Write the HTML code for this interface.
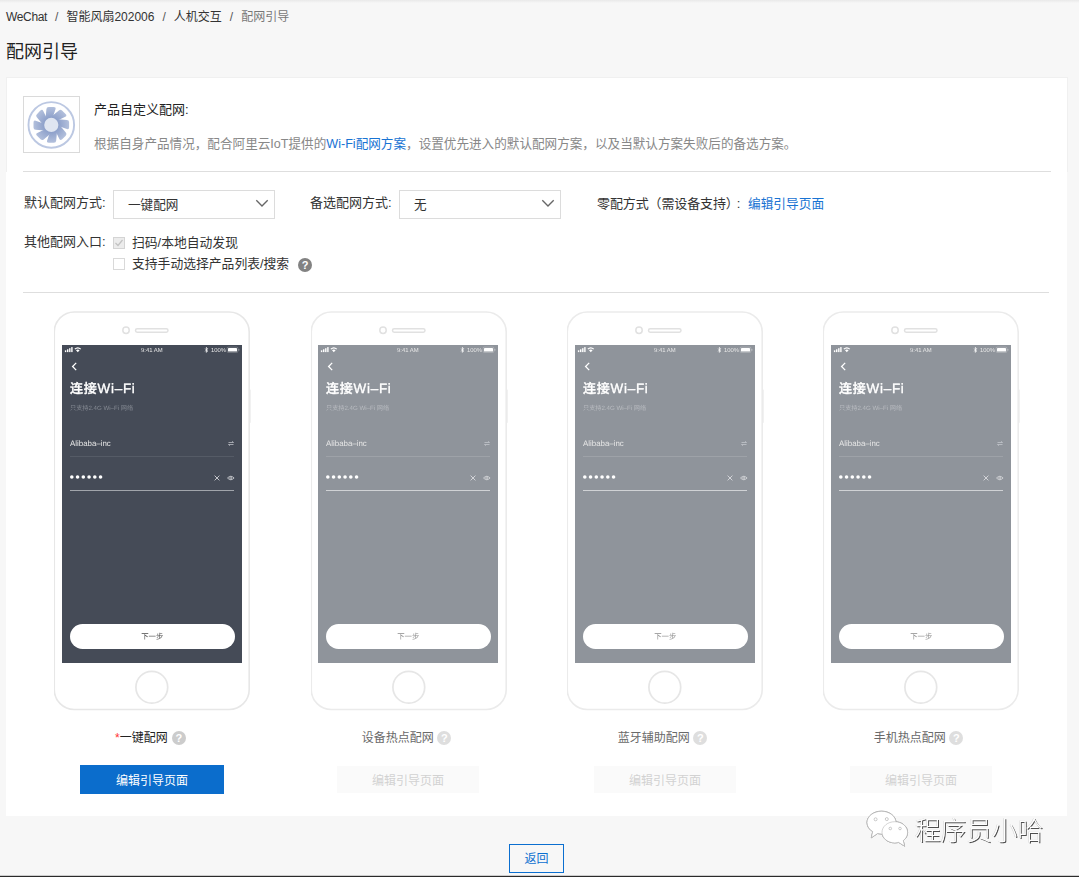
<!DOCTYPE html>
<html lang="zh-CN">
<head>
<meta charset="utf-8">
<title>配网引导</title>
<style>
*{box-sizing:border-box;margin:0;padding:0}
html,body{width:1079px;height:877px;overflow:hidden}
body{position:relative;background:#f7f7f7;font-family:"Liberation Sans","Noto Sans CJK SC",sans-serif;font-size:13px;color:#333}
.abs{position:absolute;white-space:nowrap;line-height:1}
.topshade{position:absolute;left:0;top:0;width:1079px;height:3px;background:linear-gradient(#e9e9e9,#f7f7f7)}
.crumb{left:6px;top:11px;font-size:12px;color:#333}
.crumb .sep{color:#555;margin:0 8px}
.crumb .cur{color:#777}
.crumb .wc{letter-spacing:-0.35px}
.h1{left:6px;top:43px;font-size:18px;color:#222}
.card{position:absolute;left:6px;top:78px;width:1061px;height:738px;background:#fff}
.cardtop{position:absolute;left:6px;top:77px;width:1062px;height:95px;border:1px solid #f0f0f0;border-bottom:none}
.iconbox{position:absolute;left:23px;top:96px;width:57px;height:57px;border:1px solid #dadada;background:#fff}
.hr{position:absolute;height:1px;background:#dedede}
.lbl{font-size:13px;color:#333}
.s2{font-size:12.8px}
.lbl.lk{font-size:12.7px}
.desc{font-size:12.6px;color:#888}
.lk{color:#1873d3}
.sel{position:absolute;width:162px;height:29px;border:1px solid #dcdcdc;background:#fff}
.sel span{position:absolute;left:14px;top:8px;font-size:12.6px;line-height:1;color:#333}
.sel svg{position:absolute;right:5px;top:8.3px}
.cb{position:absolute;width:12px;height:12px;border:1px solid #d9d9d9;background:#fff}
.cb.dis{background:#ececec;border-color:#d4d4d4}
.help{position:absolute;width:14px;height:14px;border-radius:50%;background:#cccccc;color:#fff;font-size:11px;font-weight:bold;text-align:center;line-height:14px;font-family:"Liberation Sans",sans-serif}
.help.lt{background:#dedede}
.help.dark{background:#828282}
.phone{position:absolute;top:311px;width:196px;height:399px}
.phone .shell{position:absolute;left:0;top:0}
.phone .scr{position:absolute;left:8px;top:34px;width:180px;height:318px;background:#454b57;overflow:hidden;color:#fff;text-rendering:geometricPrecision}
.phone.off .scr{background:#8f949b}
.scr .t{position:absolute;white-space:nowrap;line-height:1;will-change:transform}
.scr svg{position:absolute}
.scr .sb{left:0;top:0}
.scr .st{font-size:5.9px;color:#e8e8e8}
.scr .bk{left:8.6px;top:16.5px}
.scr .ti{left:8px;top:37px;font-size:13px;font-weight:500;letter-spacing:0.75px;-webkit-text-stroke:0.35px #fff}
.scr .ti span{font-size:13.45px}
.scr .su{left:8px;top:61px;font-size:6.15px;color:#868b94}
.phone.off .su{color:#b9bcc1}
.scr .ss{left:8px;top:95.1px;font-size:7.9px;color:#e6e6e6}
.scr .sw{left:166px;top:96px}
.scr .ln{position:absolute;left:8px;width:164px;height:1px}
.scr .l1{top:111px;background:#555b66}
.phone.off .l1{background:#9ea2a8}
.scr .l2{top:145px;background:#a1a5ab}
.phone.off .l2{background:#d0d2d5}
.scr .dots{left:7.9px;top:130.3px}
.scr .xx{left:152px;top:130px}
.scr .ey{left:164.5px;top:130px}
.scr .btn{will-change:transform;position:absolute;left:8px;top:279px;width:164.5px;height:25px;border-radius:13px;background:#fff;color:#4a4a4a;font-size:7.4px;text-align:center;line-height:25px}
.phone.off .btn{color:#8c8c8c}
.plabel{font-size:12px;color:#6a6a6a}
.star{color:#f33}
.pbtn{position:absolute;height:29px;text-align:center;font-size:12px;line-height:32px}
.pbtn.pri{background:#0b6dcc;color:#fff;width:144px}
.pbtn.dis{background:#fafafa;color:#d2d2d2;width:142px;height:27px;line-height:30px}
.ret{position:absolute;left:509px;top:844px;width:55px;height:29px;border:1px solid #0b6fd0;background:#f7f7f7;color:#0b6fd0;font-size:12px;text-align:center;line-height:29.5px}
.bottomline{position:absolute;left:0;top:875px;width:1079px;height:2px;background:linear-gradient(#cdcdcd 50%,#2b2b2b 50%)}
.wm{left:915px;top:818.5px;font-size:25.6px;font-weight:300;color:#fff;will-change:transform;text-shadow:1px 1px 0 #4f4f4f,-0.5px -0.5px 0 #cfcfcf}
.wx{position:absolute;left:864px;top:808px;filter:drop-shadow(0.8px 0.8px 0 #666)}
</style>
</head>
<body>
<div class="topshade"></div>
<div class="abs crumb"><span class="wc">WeChat</span><span class="sep">/</span>智能风扇202006<span class="sep">/</span>人机交互<span class="sep">/</span><span class="cur">配网引导</span></div>
<div class="abs h1">配网引导</div>
<div class="card"></div><div class="cardtop"></div>

<div class="iconbox"><svg width="55" height="55" viewBox="0 0 55 55" style="position:absolute;left:0;top:0"><defs><radialGradient id="fg" gradientUnits="userSpaceOnUse" cx="0" cy="0" r="18"><stop offset="0.35" stop-color="#8b9ec9"/><stop offset="1" stop-color="#b3c0dc"/></radialGradient></defs><circle cx="27.3" cy="27.9" r="22.8" fill="none" stroke="#bcc8e2" stroke-width="1.9"/><g fill="url(#fg)" transform="translate(27.3 27.9)"><path d="M-5.7 -7.2 L-4.9 -15.6 Q-4.8 -17.8 -2.6 -17.8 L2.4 -17.8 Q4.9 -17.8 4.2 -15.6 L1.2 -7 L1 -4 L-5 -4 Z" transform="rotate(0)"/><path d="M-5.7 -7.2 L-4.9 -15.6 Q-4.8 -17.8 -2.6 -17.8 L2.4 -17.8 Q4.9 -17.8 4.2 -15.6 L1.2 -7 L1 -4 L-5 -4 Z" transform="rotate(45)"/><path d="M-5.7 -7.2 L-4.9 -15.6 Q-4.8 -17.8 -2.6 -17.8 L2.4 -17.8 Q4.9 -17.8 4.2 -15.6 L1.2 -7 L1 -4 L-5 -4 Z" transform="rotate(90)"/><path d="M-5.7 -7.2 L-4.9 -15.6 Q-4.8 -17.8 -2.6 -17.8 L2.4 -17.8 Q4.9 -17.8 4.2 -15.6 L1.2 -7 L1 -4 L-5 -4 Z" transform="rotate(135)"/><path d="M-5.7 -7.2 L-4.9 -15.6 Q-4.8 -17.8 -2.6 -17.8 L2.4 -17.8 Q4.9 -17.8 4.2 -15.6 L1.2 -7 L1 -4 L-5 -4 Z" transform="rotate(180)"/><path d="M-5.7 -7.2 L-4.9 -15.6 Q-4.8 -17.8 -2.6 -17.8 L2.4 -17.8 Q4.9 -17.8 4.2 -15.6 L1.2 -7 L1 -4 L-5 -4 Z" transform="rotate(225)"/><path d="M-5.7 -7.2 L-4.9 -15.6 Q-4.8 -17.8 -2.6 -17.8 L2.4 -17.8 Q4.9 -17.8 4.2 -15.6 L1.2 -7 L1 -4 L-5 -4 Z" transform="rotate(270)"/><path d="M-5.7 -7.2 L-4.9 -15.6 Q-4.8 -17.8 -2.6 -17.8 L2.4 -17.8 Q4.9 -17.8 4.2 -15.6 L1.2 -7 L1 -4 L-5 -4 Z" transform="rotate(315)"/></g><circle cx="27.3" cy="27.9" r="7.1" fill="#dfe5f1"/></svg></div>
<div class="abs lbl" style="left:94px;top:102.5px;color:#222">产品自定义配网:</div>
<div class="abs desc" style="left:94px;top:138px">根据自身产品情况，配合阿里云IoT提供的<span class="lk">Wi-Fi配网方案</span>，设置优先进入的默认配网方案，以及当默认方案失败后的备选方案。</div>
<div class="hr" style="left:23px;top:171px;width:1027.5px"></div>

<div class="abs lbl" style="left:24px;top:196px">默认配网方式:</div>
<div class="sel" style="left:113px;top:190px"><span>一键配网</span><svg width="14" height="9" viewBox="0 0 14 9"><path d="M1.3 1.2 L7 7 L12.7 1.2" fill="none" stroke="#666" stroke-width="1.35"/></svg></div>
<div class="abs lbl" style="left:310px;top:196px">备选配网方式:</div>
<div class="sel" style="left:399px;top:190px"><span>无</span><svg width="14" height="9" viewBox="0 0 14 9"><path d="M1.3 1.2 L7 7 L12.7 1.2" fill="none" stroke="#666" stroke-width="1.35"/></svg></div>
<div class="abs lbl" style="left:597px;top:196.5px;letter-spacing:-0.12px">零配方式（需设备支持）<span style="margin-left:-2px">:</span></div>
<div class="abs lbl lk" style="left:748px;top:197.5px">编辑引导页面</div>

<div class="abs lbl" style="left:24px;top:235px">其他配网入口:</div>
<div class="cb dis" style="left:113px;top:237px"><svg width="10" height="10" viewBox="0 0 10 10" style="position:absolute;left:0;top:0"><path d="M1.5 5 L4 7.5 L8.5 2" fill="none" stroke="#c2c2c2" stroke-width="1.2"/></svg></div>
<div class="abs lbl s2" style="left:132px;top:237px">扫码/本地自动发现</div>
<div class="cb" style="left:113px;top:258px"></div>
<div class="abs lbl s2" style="left:132px;top:258px">支持手动选择产品列表/搜索</div>
<div class="help dark" style="left:298px;top:258px">?</div>
<div class="hr" style="left:23px;top:292px;width:1026px"></div>

<div class="phone" style="left:54px">
<svg class="shell" width="200" height="400" viewBox="0 0 200 400"><rect x="195.2" y="78.6" width="1.5" height="33.2" fill="#ececec"/><rect x="0.25" y="1.05" width="194.95" height="397.45" rx="20" fill="#fff" stroke="#e7e7e7" stroke-width="1.6"/><circle cx="72.03" cy="19.2" r="3.2" fill="none" stroke="#e1e1e1" stroke-width="1.5"/><rect x="81.5" y="17.8" width="32.5" height="3.4" rx="1.7" fill="none" stroke="#e1e1e1" stroke-width="1.5"/><circle cx="97.8" cy="376.25" r="15.9" fill="none" stroke="#e6e6e6" stroke-width="1.7"/></svg>
<div class="scr" style="left:8px">
<svg class="sb" width="180" height="10" viewBox="0 0 180 10"><g fill="#fff">
<rect x="2.9" y="5.3" width="1.4" height="1.8"/><rect x="5" y="4.3" width="1.4" height="2.8"/><rect x="7.1" y="3.2" width="1.4" height="3.9"/><rect x="9.2" y="2.1" width="1.4" height="5"/>
<path d="M12.4 3.7 Q15.8 0.7 19.2 3.7 L18.3 4.6 Q15.8 2.5 13.3 4.6 Z"/><path d="M14 5.3 Q15.8 3.8 17.6 5.3 L15.8 7.3 Z"/>
<rect x="166" y="3" width="9" height="3.6" rx="0.4"/><rect x="165.1" y="2.1" width="10.8" height="5.4" rx="1.2" fill="none" stroke="#fff" stroke-opacity="0.45" stroke-width="0.5"/><rect x="176.5" y="3.9" width="0.8" height="1.8" fill-opacity="0.5"/>
<path d="M143.2 3.6 L145.6 6 L144.4 7.4 L144.4 2.4 L145.6 3.8 L143.2 6.4" fill="none" stroke="#fff" stroke-width="0.75"/>
</g></svg>
<div class="t st" style="left:79px;top:3.6px">9:41 AM</div>
<div class="t st" style="left:148.5px;top:3.6px">100%</div>
<svg class="bk" width="7" height="9" viewBox="0 0 7 9"><path d="M5.2 0.9 L1.6 4.5 L5.2 8.1" fill="none" stroke="#fff" stroke-width="1.3"/></svg>
<div class="t ti">连接<span>Wi–Fi</span></div>
<div class="t su">只支持2.4G Wi–Fi 网络</div>
<div class="t ss">Alibaba–inc</div>
<svg class="sw" width="6" height="5" viewBox="0 0 6 5"><path d="M0.5 1.5 H5.5 M4 0.3 L5.5 1.5 M0.5 3.5 H5.5 M2 4.7 L0.5 3.5" fill="none" stroke="#c9ccd1" stroke-width="0.7"/></svg>
<div class="ln l1"></div>
<svg class="dots" width="34" height="4" viewBox="0 0 34 4"><g fill="#fff"><circle cx="1.80" cy="2" r="1.8"/><circle cx="7.55" cy="2" r="1.8"/><circle cx="13.30" cy="2" r="1.8"/><circle cx="19.05" cy="2" r="1.8"/><circle cx="24.80" cy="2" r="1.8"/><circle cx="30.55" cy="2" r="1.8"/></g></svg>
<svg class="xx" width="6" height="6" viewBox="0 0 6 6"><path d="M0.6 0.6 L5.4 5.4 M5.4 0.6 L0.6 5.4" fill="none" stroke="#e4e5e8" stroke-width="0.8"/></svg>
<svg class="ey" width="8" height="6" viewBox="0 0 8 6"><path d="M0.5 3 Q3.8 -0.5 7.1 3 Q3.8 6.5 0.5 3 Z" fill="none" stroke="#dcdde0" stroke-width="0.75"/><circle cx="3.8" cy="3" r="1.1" fill="none" stroke="#dcdde0" stroke-width="0.7"/></svg>
<div class="ln l2"></div>
<div class="btn">下一步</div>
</div>
</div>
<div class="abs plabel" style="left:115px;top:731.5px;color:#222"><span class="star">*</span>一键配网</div>
<div class="help" style="left:171.8px;top:730.6px">?</div>
<div class="pbtn pri" style="left:80px;top:765px">编辑引导页面</div>
<div class="phone off" style="left:311px">
<svg class="shell" width="200" height="400" viewBox="0 0 200 400"><rect x="195.2" y="78.6" width="1.5" height="33.2" fill="#ececec"/><rect x="0.25" y="1.05" width="194.95" height="397.45" rx="20" fill="#fff" stroke="#ebebeb" stroke-width="1.6"/><circle cx="72.03" cy="19.2" r="3.2" fill="none" stroke="#e1e1e1" stroke-width="1.5"/><rect x="81.5" y="17.8" width="32.5" height="3.4" rx="1.7" fill="none" stroke="#e1e1e1" stroke-width="1.5"/><circle cx="97.8" cy="376.25" r="15.9" fill="none" stroke="#e6e6e6" stroke-width="1.7"/></svg>
<div class="scr" style="left:7px">
<svg class="sb" width="180" height="10" viewBox="0 0 180 10"><g fill="#fff">
<rect x="2.9" y="5.3" width="1.4" height="1.8"/><rect x="5" y="4.3" width="1.4" height="2.8"/><rect x="7.1" y="3.2" width="1.4" height="3.9"/><rect x="9.2" y="2.1" width="1.4" height="5"/>
<path d="M12.4 3.7 Q15.8 0.7 19.2 3.7 L18.3 4.6 Q15.8 2.5 13.3 4.6 Z"/><path d="M14 5.3 Q15.8 3.8 17.6 5.3 L15.8 7.3 Z"/>
<rect x="166" y="3" width="9" height="3.6" rx="0.4"/><rect x="165.1" y="2.1" width="10.8" height="5.4" rx="1.2" fill="none" stroke="#fff" stroke-opacity="0.45" stroke-width="0.5"/><rect x="176.5" y="3.9" width="0.8" height="1.8" fill-opacity="0.5"/>
<path d="M143.2 3.6 L145.6 6 L144.4 7.4 L144.4 2.4 L145.6 3.8 L143.2 6.4" fill="none" stroke="#fff" stroke-width="0.75"/>
</g></svg>
<div class="t st" style="left:79px;top:3.6px">9:41 AM</div>
<div class="t st" style="left:148.5px;top:3.6px">100%</div>
<svg class="bk" width="7" height="9" viewBox="0 0 7 9"><path d="M5.2 0.9 L1.6 4.5 L5.2 8.1" fill="none" stroke="#fff" stroke-width="1.3"/></svg>
<div class="t ti">连接<span>Wi–Fi</span></div>
<div class="t su">只支持2.4G Wi–Fi 网络</div>
<div class="t ss">Alibaba–inc</div>
<svg class="sw" width="6" height="5" viewBox="0 0 6 5"><path d="M0.5 1.5 H5.5 M4 0.3 L5.5 1.5 M0.5 3.5 H5.5 M2 4.7 L0.5 3.5" fill="none" stroke="#c9ccd1" stroke-width="0.7"/></svg>
<div class="ln l1"></div>
<svg class="dots" width="34" height="4" viewBox="0 0 34 4"><g fill="#fff"><circle cx="1.80" cy="2" r="1.8"/><circle cx="7.55" cy="2" r="1.8"/><circle cx="13.30" cy="2" r="1.8"/><circle cx="19.05" cy="2" r="1.8"/><circle cx="24.80" cy="2" r="1.8"/><circle cx="30.55" cy="2" r="1.8"/></g></svg>
<svg class="xx" width="6" height="6" viewBox="0 0 6 6"><path d="M0.6 0.6 L5.4 5.4 M5.4 0.6 L0.6 5.4" fill="none" stroke="#e4e5e8" stroke-width="0.8"/></svg>
<svg class="ey" width="8" height="6" viewBox="0 0 8 6"><path d="M0.5 3 Q3.8 -0.5 7.1 3 Q3.8 6.5 0.5 3 Z" fill="none" stroke="#dcdde0" stroke-width="0.75"/><circle cx="3.8" cy="3" r="1.1" fill="none" stroke="#dcdde0" stroke-width="0.7"/></svg>
<div class="ln l2"></div>
<div class="btn">下一步</div>
</div>
</div>
<div class="abs plabel" style="left:361.7px;top:731.5px">设备热点配网</div>
<div class="help lt" style="left:437.3px;top:730.6px">?</div>
<div class="pbtn dis" style="left:337px;top:766px">编辑引导页面</div>
<div class="phone off" style="left:567px">
<svg class="shell" width="200" height="400" viewBox="0 0 200 400"><rect x="195.2" y="78.6" width="1.5" height="33.2" fill="#ececec"/><rect x="0.25" y="1.05" width="194.95" height="397.45" rx="20" fill="#fff" stroke="#ebebeb" stroke-width="1.6"/><circle cx="72.03" cy="19.2" r="3.2" fill="none" stroke="#e1e1e1" stroke-width="1.5"/><rect x="81.5" y="17.8" width="32.5" height="3.4" rx="1.7" fill="none" stroke="#e1e1e1" stroke-width="1.5"/><circle cx="97.8" cy="376.25" r="15.9" fill="none" stroke="#e6e6e6" stroke-width="1.7"/></svg>
<div class="scr" style="left:8px">
<svg class="sb" width="180" height="10" viewBox="0 0 180 10"><g fill="#fff">
<rect x="2.9" y="5.3" width="1.4" height="1.8"/><rect x="5" y="4.3" width="1.4" height="2.8"/><rect x="7.1" y="3.2" width="1.4" height="3.9"/><rect x="9.2" y="2.1" width="1.4" height="5"/>
<path d="M12.4 3.7 Q15.8 0.7 19.2 3.7 L18.3 4.6 Q15.8 2.5 13.3 4.6 Z"/><path d="M14 5.3 Q15.8 3.8 17.6 5.3 L15.8 7.3 Z"/>
<rect x="166" y="3" width="9" height="3.6" rx="0.4"/><rect x="165.1" y="2.1" width="10.8" height="5.4" rx="1.2" fill="none" stroke="#fff" stroke-opacity="0.45" stroke-width="0.5"/><rect x="176.5" y="3.9" width="0.8" height="1.8" fill-opacity="0.5"/>
<path d="M143.2 3.6 L145.6 6 L144.4 7.4 L144.4 2.4 L145.6 3.8 L143.2 6.4" fill="none" stroke="#fff" stroke-width="0.75"/>
</g></svg>
<div class="t st" style="left:79px;top:3.6px">9:41 AM</div>
<div class="t st" style="left:148.5px;top:3.6px">100%</div>
<svg class="bk" width="7" height="9" viewBox="0 0 7 9"><path d="M5.2 0.9 L1.6 4.5 L5.2 8.1" fill="none" stroke="#fff" stroke-width="1.3"/></svg>
<div class="t ti">连接<span>Wi–Fi</span></div>
<div class="t su">只支持2.4G Wi–Fi 网络</div>
<div class="t ss">Alibaba–inc</div>
<svg class="sw" width="6" height="5" viewBox="0 0 6 5"><path d="M0.5 1.5 H5.5 M4 0.3 L5.5 1.5 M0.5 3.5 H5.5 M2 4.7 L0.5 3.5" fill="none" stroke="#c9ccd1" stroke-width="0.7"/></svg>
<div class="ln l1"></div>
<svg class="dots" width="34" height="4" viewBox="0 0 34 4"><g fill="#fff"><circle cx="1.80" cy="2" r="1.8"/><circle cx="7.55" cy="2" r="1.8"/><circle cx="13.30" cy="2" r="1.8"/><circle cx="19.05" cy="2" r="1.8"/><circle cx="24.80" cy="2" r="1.8"/><circle cx="30.55" cy="2" r="1.8"/></g></svg>
<svg class="xx" width="6" height="6" viewBox="0 0 6 6"><path d="M0.6 0.6 L5.4 5.4 M5.4 0.6 L0.6 5.4" fill="none" stroke="#e4e5e8" stroke-width="0.8"/></svg>
<svg class="ey" width="8" height="6" viewBox="0 0 8 6"><path d="M0.5 3 Q3.8 -0.5 7.1 3 Q3.8 6.5 0.5 3 Z" fill="none" stroke="#dcdde0" stroke-width="0.75"/><circle cx="3.8" cy="3" r="1.1" fill="none" stroke="#dcdde0" stroke-width="0.7"/></svg>
<div class="ln l2"></div>
<div class="btn">下一步</div>
</div>
</div>
<div class="abs plabel" style="left:617.7px;top:731.5px">蓝牙辅助配网</div>
<div class="help lt" style="left:693.3px;top:730.6px">?</div>
<div class="pbtn dis" style="left:594px;top:766px">编辑引导页面</div>
<div class="phone off" style="left:823px">
<svg class="shell" width="200" height="400" viewBox="0 0 200 400"><rect x="195.2" y="78.6" width="1.5" height="33.2" fill="#ececec"/><rect x="0.25" y="1.05" width="194.95" height="397.45" rx="20" fill="#fff" stroke="#ebebeb" stroke-width="1.6"/><circle cx="72.03" cy="19.2" r="3.2" fill="none" stroke="#e1e1e1" stroke-width="1.5"/><rect x="81.5" y="17.8" width="32.5" height="3.4" rx="1.7" fill="none" stroke="#e1e1e1" stroke-width="1.5"/><circle cx="97.8" cy="376.25" r="15.9" fill="none" stroke="#e6e6e6" stroke-width="1.7"/></svg>
<div class="scr" style="left:8px">
<svg class="sb" width="180" height="10" viewBox="0 0 180 10"><g fill="#fff">
<rect x="2.9" y="5.3" width="1.4" height="1.8"/><rect x="5" y="4.3" width="1.4" height="2.8"/><rect x="7.1" y="3.2" width="1.4" height="3.9"/><rect x="9.2" y="2.1" width="1.4" height="5"/>
<path d="M12.4 3.7 Q15.8 0.7 19.2 3.7 L18.3 4.6 Q15.8 2.5 13.3 4.6 Z"/><path d="M14 5.3 Q15.8 3.8 17.6 5.3 L15.8 7.3 Z"/>
<rect x="166" y="3" width="9" height="3.6" rx="0.4"/><rect x="165.1" y="2.1" width="10.8" height="5.4" rx="1.2" fill="none" stroke="#fff" stroke-opacity="0.45" stroke-width="0.5"/><rect x="176.5" y="3.9" width="0.8" height="1.8" fill-opacity="0.5"/>
<path d="M143.2 3.6 L145.6 6 L144.4 7.4 L144.4 2.4 L145.6 3.8 L143.2 6.4" fill="none" stroke="#fff" stroke-width="0.75"/>
</g></svg>
<div class="t st" style="left:79px;top:3.6px">9:41 AM</div>
<div class="t st" style="left:148.5px;top:3.6px">100%</div>
<svg class="bk" width="7" height="9" viewBox="0 0 7 9"><path d="M5.2 0.9 L1.6 4.5 L5.2 8.1" fill="none" stroke="#fff" stroke-width="1.3"/></svg>
<div class="t ti">连接<span>Wi–Fi</span></div>
<div class="t su">只支持2.4G Wi–Fi 网络</div>
<div class="t ss">Alibaba–inc</div>
<svg class="sw" width="6" height="5" viewBox="0 0 6 5"><path d="M0.5 1.5 H5.5 M4 0.3 L5.5 1.5 M0.5 3.5 H5.5 M2 4.7 L0.5 3.5" fill="none" stroke="#c9ccd1" stroke-width="0.7"/></svg>
<div class="ln l1"></div>
<svg class="dots" width="34" height="4" viewBox="0 0 34 4"><g fill="#fff"><circle cx="1.80" cy="2" r="1.8"/><circle cx="7.55" cy="2" r="1.8"/><circle cx="13.30" cy="2" r="1.8"/><circle cx="19.05" cy="2" r="1.8"/><circle cx="24.80" cy="2" r="1.8"/><circle cx="30.55" cy="2" r="1.8"/></g></svg>
<svg class="xx" width="6" height="6" viewBox="0 0 6 6"><path d="M0.6 0.6 L5.4 5.4 M5.4 0.6 L0.6 5.4" fill="none" stroke="#e4e5e8" stroke-width="0.8"/></svg>
<svg class="ey" width="8" height="6" viewBox="0 0 8 6"><path d="M0.5 3 Q3.8 -0.5 7.1 3 Q3.8 6.5 0.5 3 Z" fill="none" stroke="#dcdde0" stroke-width="0.75"/><circle cx="3.8" cy="3" r="1.1" fill="none" stroke="#dcdde0" stroke-width="0.7"/></svg>
<div class="ln l2"></div>
<div class="btn">下一步</div>
</div>
</div>
<div class="abs plabel" style="left:873.7px;top:731.5px">手机热点配网</div>
<div class="help lt" style="left:949.3px;top:730.6px">?</div>
<div class="pbtn dis" style="left:850px;top:766px">编辑引导页面</div>

<div class="ret">返回</div>
<svg class="wx" width="48" height="42" viewBox="864 808 48 42"><g id="wxs" fill="#fff" stroke="#c2c2c2" stroke-width="0.7"><path d="M881.5 811.2 C873.5 811.2 867 816.3 867 822.6 C867 826.3 869.2 829.5 872.7 831.6 L871.3 837.8 L877.6 833.5 C878.8 833.8 880.1 834 881.5 834 C889.5 834 896 828.9 896 822.6 C896 816.3 889.5 811.2 881.5 811.2 Z"/><path d="M894.8 821.7 C887.7 821.7 882 826.4 882 832.3 C882 838.2 887.7 842.9 894.8 842.9 C896.2 842.9 897.5 842.7 898.7 842.4 L904.6 846.2 L903.3 840.6 C906 838.7 907.6 835.7 907.6 832.3 C907.6 826.4 901.9 821.7 894.8 821.7 Z"/></g><g fill="#fff" stroke="#a8a8a8" stroke-width="0.6"><circle cx="875.6" cy="819.3" r="1.5"/><circle cx="886.8" cy="819.1" r="1.5"/><circle cx="890.3" cy="828.5" r="1.3"/><circle cx="900" cy="828.5" r="1.3"/></g></svg>
<div class="abs wm">程序员小哈</div>
<div class="bottomline"></div>
</body>
</html>
